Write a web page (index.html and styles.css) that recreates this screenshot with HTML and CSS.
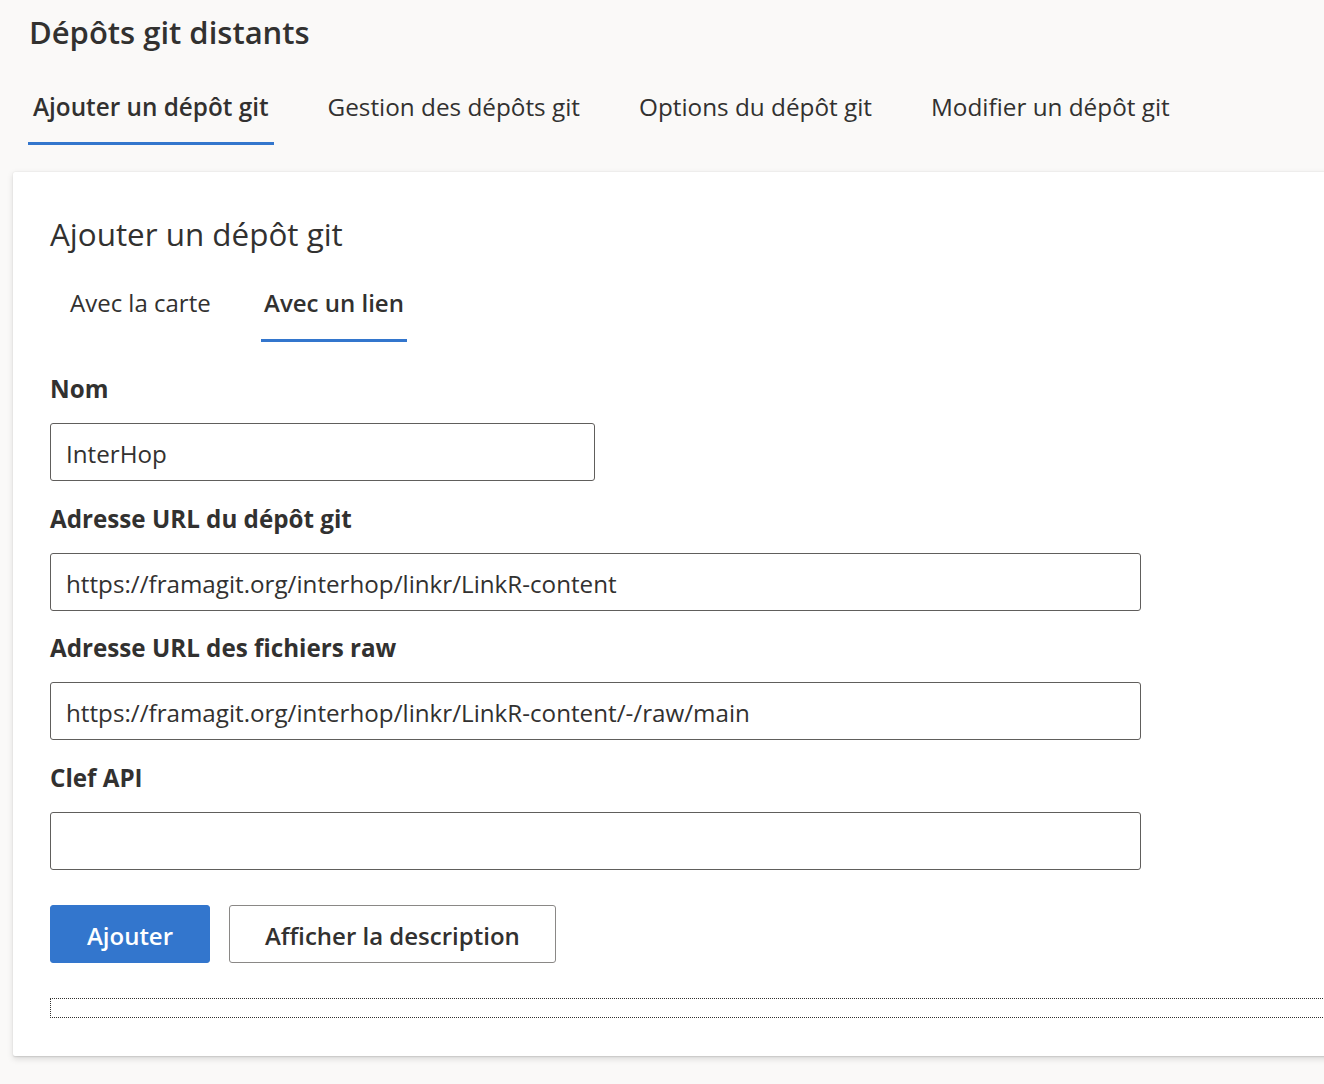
FILE: index.html
```html
<!DOCTYPE html>
<html lang="fr">
<head>
<meta charset="utf-8">
<title>Dépôts git distants</title>
<link rel="stylesheet" href="styles.css">
</head>
<body>
<div class="page">
  <header class="header">
    <h1 class="title">Dépôts git distants</h1>
    <nav class="tabs">
      <span class="tab is-selected">Ajouter un dépôt git</span>
      <span class="tab">Gestion des dépôts git</span>
      <span class="tab">Options du dépôt git</span>
      <span class="tab">Modifier un dépôt git</span>
    </nav>
  </header>

  <section class="card">
    <h2 class="card-title">Ajouter un dépôt git</h2>
    <nav class="subtabs">
      <span class="subtab" data-text="Avec la carte">Avec la carte</span>
      <span class="subtab is-selected" data-text="Avec un lien">Avec un lien</span>
    </nav>

    <div class="fields">
      <div class="field">
        <label class="label">Nom</label>
        <div class="input input-short">InterHop</div>
      </div>
      <div class="field">
        <label class="label">Adresse URL du dépôt git</label>
        <div class="input">https://framagit.org/interhop/linkr/LinkR-content</div>
      </div>
      <div class="field">
        <label class="label">Adresse URL des fichiers raw</label>
        <div class="input">https://framagit.org/interhop/linkr/LinkR-content/-/raw/main</div>
      </div>
      <div class="field">
        <label class="label">Clef API</label>
        <div class="input"></div>
      </div>
    </div>

    <div class="actions">
      <button class="btn btn-primary">Ajouter</button>
      <button class="btn btn-default">Afficher la description</button>
    </div>

    <div class="dotted"></div>
  </section>
</div>
</body>
</html>
```
FILE: styles.css
```css
html, body {
  margin: 0;
  padding: 0;
  overflow: hidden;
}

body {
  background: #faf9f8;
  color: #323130;
  font-family: "Open Sans", "Noto Sans", sans-serif;
  min-height: 1084px;
}

.page {
  min-height: 1084px;
}

.header {
  padding: 12px 0 0 28px;
}

.title {
  margin: 0;
  font-size: 31px;
  line-height: 40px;
  font-weight: 600;
  padding-left: 1px;
}

.tabs {
  display: flex;
  gap: 49px;
  margin-top: 39px;
}

.tab,
.subtab {
  display: inline-block;
  font-weight: 400;
  line-height: 32px;
  border-bottom: 3px solid transparent;
  white-space: nowrap;
}

.tab {
  font-size: 24.3px;
  padding: 0 5px 19px;
}

.subtab {
  font-size: 24px;
  padding: 0 3px 20px;
}

.subtab::after {
  content: attr(data-text);
  display: block;
  height: 0;
  overflow: hidden;
  visibility: hidden;
  font-weight: 600;
}

.tab.is-selected,
.subtab.is-selected {
  font-weight: 600;
  border-bottom-color: #3376cd;
}

.card {
  background: #ffffff;
  margin: 27px -80px 0 13px;
  padding: 42px 37px 38px 37px;
  border-radius: 2px;
  box-shadow: 0 2.6px 6px rgba(0, 0, 0, 0.13), 0 0.5px 1.5px rgba(0, 0, 0, 0.11);
}

.card-title {
  margin: 0;
  font-size: 31.4px;
  line-height: 40px;
  font-weight: 400;
}

.subtabs {
  display: flex;
  gap: 41px;
  margin: 33px 0 0 17px;
}

.fields {
  display: flex;
  flex-direction: column;
  gap: 21.6px;
  margin-top: 31px;
}

.field {
  display: flex;
  flex-direction: column;
}

.label {
  display: block;
  font-size: 24.2px;
  line-height: 32px;
  font-weight: 700;
  padding-bottom: 18px;
}

.input {
  box-sizing: border-box;
  width: 1091px;
  height: 58px;
  border: 1px solid #605e5c;
  border-radius: 3px;
  padding: 4px 15px 0;
  font-size: 24.2px;
  line-height: 52px;
  color: #323130;
  white-space: nowrap;
  overflow: hidden;
}

.input-short {
  width: 545px;
}

.actions {
  display: flex;
  gap: 19px;
  margin-top: 35.5px;
}

.btn {
  box-sizing: border-box;
  height: 58px;
  min-width: 160px;
  padding: 2px 35px 0;
  border-radius: 3px;
  font-family: "Open Sans", "Noto Sans", sans-serif;
  font-size: 24px;
  font-weight: 600;
  cursor: pointer;
}

.btn-primary {
  background: #3376cd;
  border: 1px solid #3376cd;
  color: #ffffff;
}

.btn-default {
  background: #ffffff;
  border: 1px solid #8a8886;
  color: #323130;
}

.dotted {
  margin-top: 35px;
  height: 18px;
  border: 1px dotted #323130;
}
```
